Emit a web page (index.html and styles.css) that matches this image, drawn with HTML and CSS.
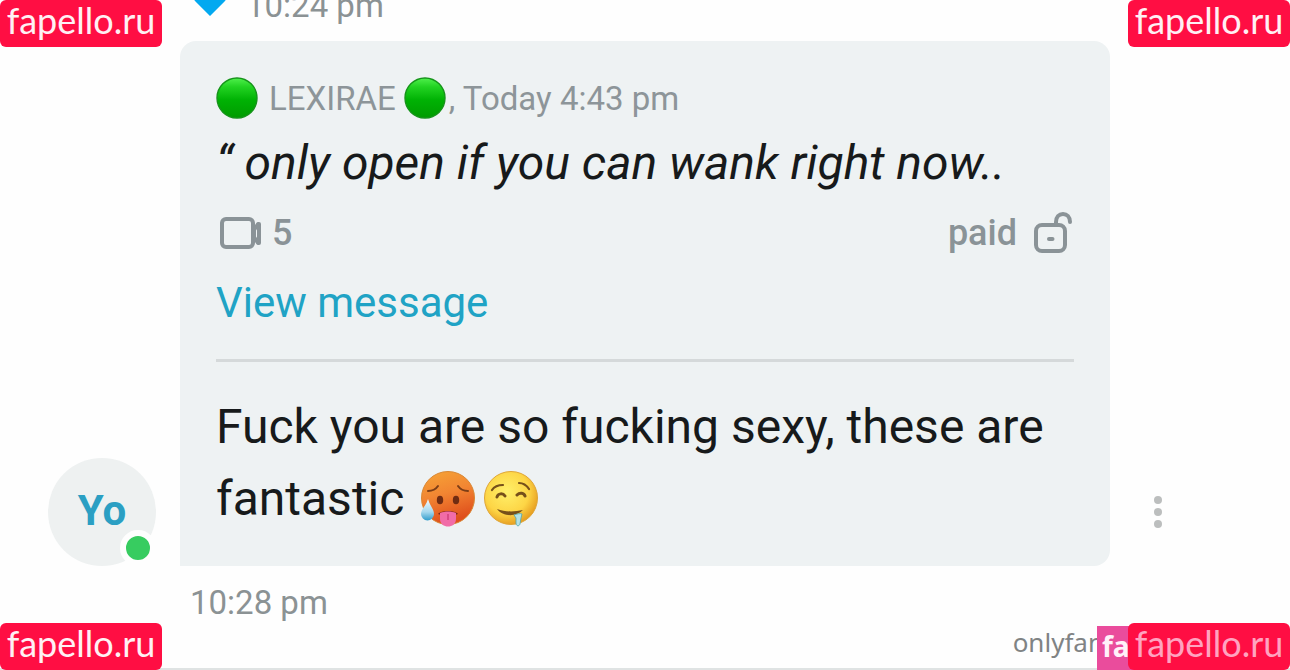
FILE: index.html
```html
<!DOCTYPE html>
<html lang="en">
<head>
<meta charset="utf-8">
<meta name="viewport" content="width=device-width, initial-scale=1">
<title>Messages</title>
<link rel="stylesheet" href="styles.css">
</head>
<body>
<svg class="defs" aria-hidden="true">
  <defs>
    <linearGradient id="green" x1="0" y1="0" x2="0" y2="1"><stop offset="0" stop-color="#4ff04c"/><stop offset=".22" stop-color="#22d322"/><stop offset=".55" stop-color="#00b204"/><stop offset="1" stop-color="#009b00"/></linearGradient>
    <linearGradient id="hot" x1="0" y1="0" x2=".3" y2="1"><stop offset="0" stop-color="#f6a536"/><stop offset=".5" stop-color="#f28532"/><stop offset="1" stop-color="#df4f1c"/></linearGradient>
    <radialGradient id="yellow" cx=".42" cy=".38" r=".64"><stop offset="0" stop-color="#fff06a"/><stop offset=".65" stop-color="#fdd545"/><stop offset="1" stop-color="#e69c1f"/></radialGradient>
    <linearGradient id="drop" x1="0" y1="0" x2="0" y2="1"><stop offset="0" stop-color="#f2fbfe"/><stop offset=".6" stop-color="#a6d8ee"/><stop offset="1" stop-color="#2f9ccb"/></linearGradient>
    <symbol id="ball" viewBox="0 0 42 42"><circle cx="21" cy="21" r="20" fill="url(#green)" stroke="#16941a" stroke-width="1.4"/></symbol>
  </defs>
</svg>
<main class="chat">
  <div class="previous">
    <svg class="heart" viewBox="0 0 36 32" role="img" aria-label="Liked"><path d="M18 31 3 16C-2 9 3 1 10 1c4 0 7 2 8 6 1-4 4-6 8-6 7 0 12 8 7 15Z" fill="#03a9f0"/></svg>
    <time class="stamp">10:24 pm</time>
  </div>
  <article class="message">
    <div class="avatar">Yo<span class="online"></span></div>
    <div class="bubble">
      <section class="quote">
        <p class="author"><svg class="ball"><use href="#ball"/></svg><span class="name">LEXIRAE</span><svg class="ball"><use href="#ball"/></svg><span class="when">, Today 4:43 pm</span></p>
        <p class="quoted">“ only open if you can wank right now..</p>
        <div class="media">
          <span class="count"><svg class="video" viewBox="0 0 44 34" fill="none" stroke="#8a9397" stroke-width="4"><rect x="3" y="3" width="31" height="28" rx="4"/><path stroke-width="4" stroke-linejoin="round" d="m35 14 4-6h1v19h-1l-4-6Z"/></svg>5</span>
          <span class="paid">paid<svg class="lock" viewBox="0 0 40 44" fill="none" stroke="#8a9397" stroke-width="4" stroke-linecap="round"><rect x="2" y="14" width="29" height="26" rx="6"/><path d="M22 14v-3c0-5 3-8 7-8s7 3 7 8"/><path d="M15 28h3.500"/></svg></span>
        </div>
        <a class="view" href="#message">View message</a>
      </section>
      <p class="text">Fuck you are so fucking sexy, these are fantastic
        <span class="emojis"><svg class="emoji" viewBox="0 0 56 56" role="img" aria-label="Hot face"><circle cx="28" cy="27" r="26.500" fill="url(#hot)" stroke="#d98835" stroke-width="1"/><g fill="none" stroke="#7c3d16" stroke-width="2" stroke-linecap="round"><path d="M8 20c5 0 8-2 10-5M38 15c2 3 5 5 10 5"/></g><g fill="#702c12"><ellipse cx="20" cy="29" rx="3.200" ry="4.300"/><ellipse cx="36" cy="29" rx="3.200" ry="4.300"/></g><path d="M18 43c3-4 17-4 20 0-5 2-15 2-20 0Z" fill="#7a2418"/><path d="M20 42c5-2 11-2 16 0v6c0 10-16 10-16 0Z" fill="#f16ca7"/><path d="M28 43v6" stroke="#cf417c" stroke-width="1.500"/><path d="M8 28c2 7 6 10 6 15a6.500 6.500 0 0 1-13 0c0-5 5-8 7-15Z" fill="url(#drop)"/></svg><svg class="emoji" viewBox="0 0 56 56" role="img" aria-label="Drooling face"><circle cx="28" cy="27" r="26.500" fill="url(#yellow)" stroke="#dfa638" stroke-width="1"/><g fill="none" stroke="#76501a" stroke-width="2.200" stroke-linecap="round"><path d="M9 19c2-3 6-5 11-5M36 12c5 0 8 3 10 6"/><path stroke-width="3" d="M14 26c1-4 6-4 8-1M34 24c3-3 7-2 8 1"/></g><path d="M14 38c8 3 17 3 26 1-7 7-20 7-26-1Z" fill="#76501a"/><path d="M31 44c3-1 6-2 8-1l-1 4-1 6c-1 3-4 2-4-1v-5Z" fill="#b5e2e6" stroke="#4ea4ad" stroke-width=".8"/></svg></span></p>
    </div>
    <button class="more" type="button" aria-label="More options"><i></i><i></i><i></i></button>
  </article>
  <time class="stamp sent">10:28 pm</time>
</main>
<span class="site">onlyfan</span>
<span class="pink">fa</span>
<span class="mark top left">fapello.ru</span>
<span class="mark top right">fapello.ru</span>
<span class="mark bottom left">fapello.ru</span>
<span class="mark bottom right">fapello.ru</span>
</body>
</html>
```
FILE: styles.css
```css
* { box-sizing: border-box; }
body {
  margin: 0;
  background: #fefefe;
  color: #171a1b;
  font-family: Roboto, "Liberation Sans", sans-serif;
}
p { margin: 0; }
.defs { position: absolute; width: 0; height: 0; }
.chat {
  position: relative;
  min-height: 100vh;
  overflow: hidden;
  border-bottom: 2px solid #dfe3e3;
}
.previous {
  display: flex;
  align-items: flex-end;
  gap: 18px;
  height: 41px;
  padding: 0 0 15px 192px;
}
.heart { width: 36px; height: 32px; flex: none; margin-bottom: 9px; }
.stamp { color: #8b9294; font-size: 33px; line-height: 40px; }
.message {
  display: grid;
  grid-template-columns: 180px 1fr 180px;
  align-items: end;
}
.avatar {
  position: relative;
  display: grid;
  place-items: center;
  width: 108px;
  height: 108px;
  margin-left: 48px;
  padding-bottom: 4px;
  border-radius: 50%;
  background: #eef1f1;
  color: #2b9fc3;
  font-size: 42px;
  font-weight: 700;
}
.online {
  position: absolute;
  right: 0;
  bottom: 0;
  width: 36px;
  height: 36px;
  border: 6px solid #fefefe;
  border-radius: 50%;
  background: #37cc60;
}
.bubble {
  padding: 36px 36px 31px;
  border-radius: 16px 16px 16px 0;
  background: #eef2f3;
}
.quote { padding-bottom: 30px; border-bottom: 3px solid #d5d9da; }
.author {
  display: flex;
  align-items: center;
  height: 42px;
  color: #8d9599;
  font-size: 33px;
}
.ball { width: 42px; height: 42px; flex: none; }
.name { margin: 0 8px 0 11px; }
.when { margin-left: 3px; }
.quoted { font-size: 48px; font-style: italic; line-height: 64px; margin-top: 12px; }
.media {
  display: flex;
  justify-content: space-between;
  height: 48px;
  margin-top: 14px;
  color: #8a9397;
  font-size: 36px;
  font-weight: 500;
}
.count, .paid { display: flex; align-items: center; }
.count { gap: 9px; padding-left: 3px; }
.paid { gap: 17px; }
.video { width: 44px; height: 34px; }
.lock { width: 40px; height: 44px; }
.view {
  display: block;
  width: fit-content;
  margin-top: 20px;
  color: #20a3c5;
  font-size: 42px;
  line-height: 52px;
  text-decoration: none;
}
.text { margin-top: 29px; font-size: 48px; line-height: 72px; }
.emojis { display: inline-flex; gap: 7px; margin-left: 4px; vertical-align: -12px; }
.emoji { width: 56px; height: 56px; }
.more {
  display: grid;
  gap: 4px;
  margin: 0 0 30px 36px;
  width: 24px;
  padding: 8px;
  border: 0;
  background: none;
}
.more i { width: 8px; height: 8px; border-radius: 50%; background: #bcbebe; }
.sent { display: block; margin: 17px 0 0 190px; }
.mark {
  position: absolute;
  display: grid;
  place-items: center;
  width: 162px;
  height: 47px;
  padding-bottom: 8px;
  border-radius: 6px;
  background: #ff0e43;
  color: #fff0f4;
  font-family: Lato, sans-serif;
  font-size: 36px;
  line-height: 38px;
}
.top { top: 0; }
.bottom { bottom: 0; }
.left { left: 0; }
.right { right: 0; }
.bottom.right { color: #ffa3c0; }
.site {
  position: absolute;
  right: 186px;
  bottom: 12px;
  color: #808384;
  font-family: "Noto Sans", sans-serif;
  font-size: 26px;
  line-height: 32px;
}
.pink {
  position: absolute;
  right: 148px;
  bottom: 0;
  width: 45px;
  height: 44px;
  padding-left: 5px;
  background: #ea4c9c;
  color: #fff0f8;
  font: 700 28px/40px "Noto Sans", sans-serif;
}
```
